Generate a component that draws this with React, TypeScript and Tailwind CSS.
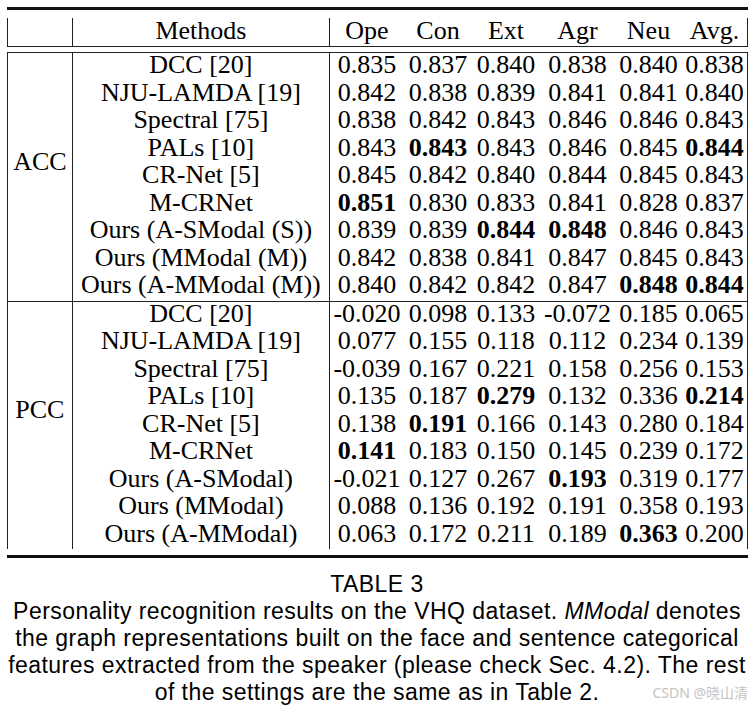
import React from "react"

const serif = { fontFamily: '"Liberation Serif", "Times New Roman", serif' }

const accRows: [string, string[]][] = [
  ["DCC [20]", ["0.835", "0.837", "0.840", "0.838", "0.840", "0.838"]],
  ["NJU-LAMDA [19]", ["0.842", "0.838", "0.839", "0.841", "0.841", "0.840"]],
  ["Spectral [75]", ["0.838", "0.842", "0.843", "0.846", "0.846", "0.843"]],
  ["PALs [10]", ["0.843", "*0.843", "0.843", "0.846", "0.845", "*0.844"]],
  ["CR-Net [5]", ["0.845", "0.842", "0.840", "0.844", "0.845", "0.843"]],
  ["M-CRNet", ["*0.851", "0.830", "0.833", "0.841", "0.828", "0.837"]],
  ["Ours (A-SModal (S))", ["0.839", "0.839", "*0.844", "*0.848", "0.846", "0.843"]],
  ["Ours (MModal (M))", ["0.842", "0.838", "0.841", "0.847", "0.845", "0.843"]],
  ["Ours (A-MModal (M))", ["0.840", "0.842", "0.842", "0.847", "*0.848", "*0.844"]],
]

const pccRows: [string, string[]][] = [
  ["DCC [20]", ["-0.020", "0.098", "0.133", "-0.072", "0.185", "0.065"]],
  ["NJU-LAMDA [19]", ["0.077", "0.155", "0.118", "0.112", "0.234", "0.139"]],
  ["Spectral [75]", ["-0.039", "0.167", "0.221", "0.158", "0.256", "0.153"]],
  ["PALs [10]", ["0.135", "0.187", "*0.279", "0.132", "0.336", "*0.214"]],
  ["CR-Net [5]", ["0.138", "*0.191", "0.166", "0.143", "0.280", "0.184"]],
  ["M-CRNet", ["*0.141", "0.183", "0.150", "0.145", "0.239", "0.172"]],
  ["Ours (A-SModal)", ["-0.021", "0.127", "0.267", "*0.193", "0.319", "0.177"]],
  ["Ours (MModal)", ["0.088", "0.136", "0.192", "0.191", "0.358", "0.193"]],
  ["Ours (A-MModal)", ["0.063", "0.172", "0.211", "0.189", "*0.363", "0.200"]],
]

// widths of the six score columns
const colW = ["w-[74px]", "w-[68px]", "w-[68px]", "w-[75px]", "w-[67px]", "w-[65px]"]

function Cell({ v, w }: { v: string; w: string }) {
  const bold = v.startsWith("*")
  return <div className={`${w} text-center ${bold ? "font-bold" : ""}`}>{bold ? v.slice(1) : v}</div>
}

function Group({ label, rows }: { label: string; rows: [string, string[]][] }) {
  return (
    <div className="flex">
      <div className="w-[65px] border-l border-[#222]">
        <div className="h-[220px] flex items-center justify-center pb-[4px]">{label}</div>
      </div>
      <div className="w-[258px] border-l border-[#222]">
        {rows.map(([m]) => (
          <div key={m} className="h-[27.5px] leading-[23.5px] pb-[4px] text-center whitespace-nowrap">
            {m}
          </div>
        ))}
      </div>
      <div className="border-l border-r border-[#222]">
        {rows.map(([m, vals]) => (
          <div key={m} className="flex h-[27.5px] leading-[23.5px] pb-[4px]">
            {vals.map((v, i) => (
              <Cell key={i} v={v} w={colW[i]} />
            ))}
          </div>
        ))}
      </div>
    </div>
  )
}

export default function App() {
  const heads = ["Ope", "Con", "Ext", "Agr", "Neu", "Avg."]
  return (
    <div className="relative w-[754px] h-[711px] bg-white text-black overflow-hidden">
      <div className="ml-[7px] w-[741px] text-[26px]" style={serif}>
        <div className="mt-[7px] h-[3px] bg-[#111]" />

        {/* header */}
        <div className="mt-[8px] flex h-[29px] border-b border-[#222] leading-[23.5px]">
          <div className="w-[65px] border-l border-[#222]" />
          <div className="w-[258px] border-l border-[#222] text-center pt-[1px]">Methods</div>
          <div className="flex border-l border-r border-[#222] pt-[1px]">
            {heads.map((h, i) => (
              <div key={h} className={`${colW[i]} text-center`}>
                {h}
              </div>
            ))}
          </div>
        </div>

        <div className="mt-[5px] border-t border-[#222]">
          <div className="border-b border-[#222]">
            <Group label="ACC" rows={accRows} />
          </div>
          <Group label="PCC" rows={pccRows} />
        </div>

        <div className="mt-[6px] h-[3px] bg-[#111]" />
      </div>

      {/* caption */}
      <div
        className="mt-[13px] text-center text-[23px] leading-[27px] tracking-[0.45px] text-black"
        style={{ fontFamily: '"Liberation Sans", Arial, sans-serif' }}
      >
        <div>TABLE 3</div>
        <div>
          Personality recognition results on the VHQ dataset. <i>MModal</i> denotes
        </div>
        <div>the graph representations built on the face and sentence categorical</div>
        <div>features extracted from the speaker (please check Sec. 4.2). The rest</div>
        <div>of the settings are the same as in Table 2.</div>
      </div>

      <div
        className="absolute right-[6px] bottom-[8px] text-[14px] text-[#c4c4c4]"
        style={{ fontFamily: '"Noto Sans", "Noto Sans CJK SC", sans-serif' }}
      >
        CSDN @晓山清
      </div>
    </div>
  )
}
